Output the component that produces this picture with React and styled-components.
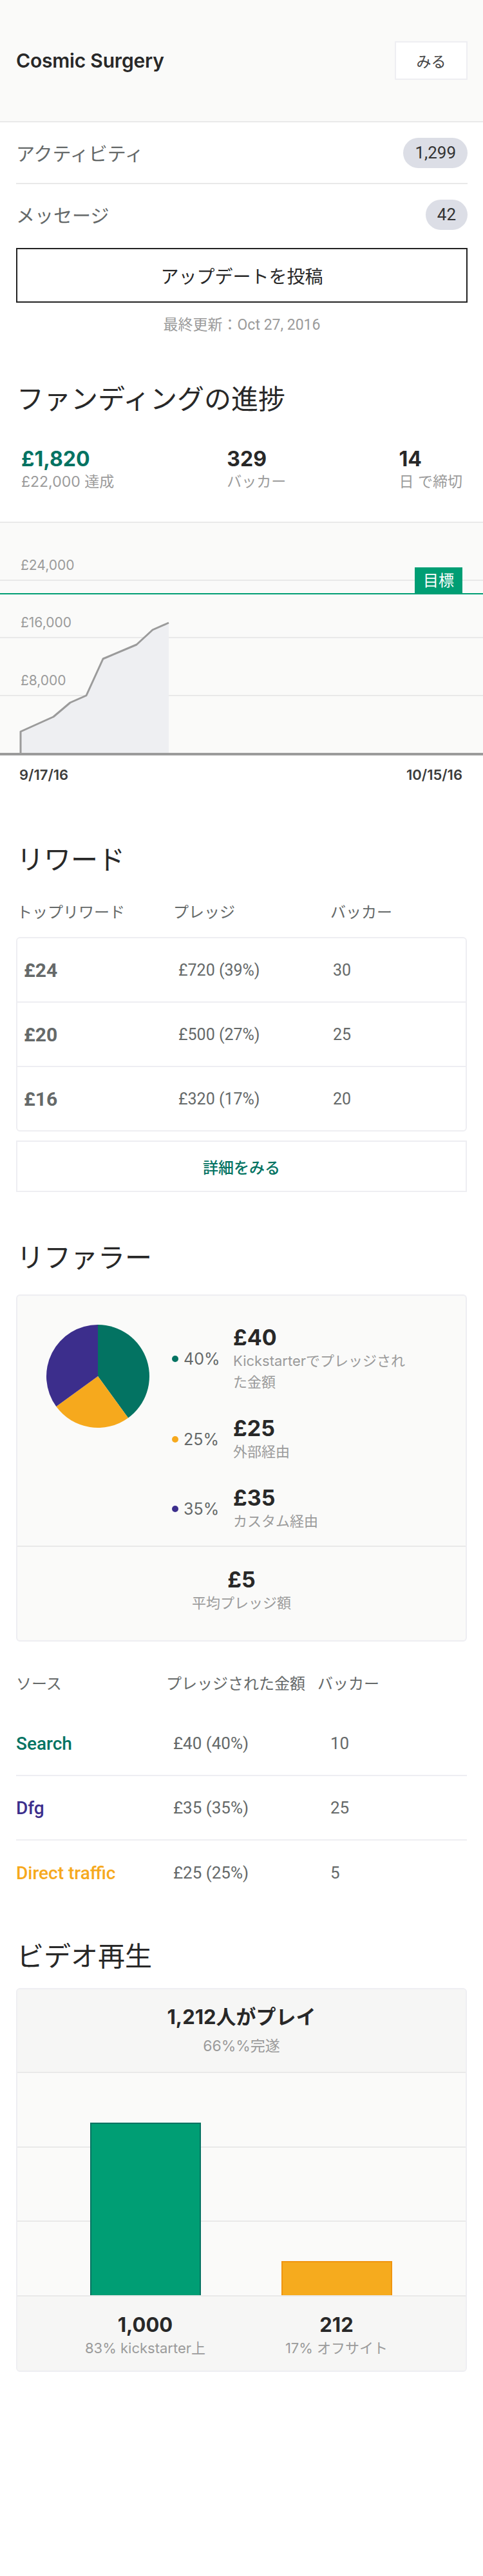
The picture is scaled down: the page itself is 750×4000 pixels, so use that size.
import React from "react";
import styled, { createGlobalStyle } from "styled-components";

const JP = `"Noto Sans CJK JP", sans-serif`;
const RB = `Roboto, "Noto Sans CJK JP", sans-serif`;
const IN = `Inter, "Noto Sans CJK JP", sans-serif`;

const C = {
  dark: "#282828",
  mid: "#656969",
  light: "#9b9b9b",
  green: "#037362",
  green5: "#009e74",
  purple: "#3c2e8c",
  orange: "#f6a91d",
  line: "#e9e9e9",
  cardLine: "#eeeef2",
  panel: "#fafaf9",
  panelDark: "#f6f6f5",
};

const Global = createGlobalStyle`
  html, body { margin: 0; padding: 0; background: #fff; }
  body { font-family: ${JP}; color: ${C.dark}; -webkit-font-smoothing: antialiased; }
  * { box-sizing: border-box; }
`;

const Page = styled.div`
  width: 750px;
  padding-bottom: 300px;
`;

const Header = styled.header`
  height: 190px;
  background: ${C.panel};
  border-bottom: 2px solid ${C.line};
  display: flex;
  align-items: center;
  justify-content: space-between;
  padding: 0 24px 0 25px;
`;

const Title = styled.h1`
  margin: 0;
  font-family: ${IN};
  font-size: 30px;
  font-weight: 600;
  letter-spacing: -0.2px;
  color: ${C.dark};
`;

const ViewButton = styled.button`
  width: 113px;
  height: 60px;
  background: #fff;
  border: 2px solid ${C.cardLine};
  font-family: ${JP};
  font-size: 23px;
  font-weight: 400;
  color: #444;
  padding: 0;
`;

const Padded = styled.div`
  padding: 0 24px 0 25px;
`;

const StatRow = styled.div`
  height: ${(p) => (p.$divider ? 96 : 94)}px;
  display: flex;
  align-items: center;
  justify-content: space-between;
  border-bottom: ${(p) => (p.$divider ? `2px solid ${C.line}` : "none")};
`;

const RowLabel = styled.span`
  font-family: ${JP};
  font-size: 29px;
  color: ${C.mid};
`;

const Badge = styled.span`
  height: 47px;
  min-width: 47px;
  padding: 0 18px;
  border-radius: 24px;
  background: #dcdee6;
  display: inline-flex;
  align-items: center;
  justify-content: center;
  font-family: ${RB};
  font-size: 26px;
  color: #333;
`;

const PostButton = styled.button`
  display: block;
  width: 100%;
  height: 85px;
  margin-top: 5px;
  background: #fff;
  border: 2px solid #222;
  font-family: ${JP};
  font-size: 28px;
  font-weight: 400;
  color: ${C.dark};
`;

const Updated = styled.p`
  margin: 22px 0 0;
  text-align: center;
  font-family: ${RB};
  font-size: 23px;
  line-height: 26px;
  color: ${C.light};
`;

const SectionTitle = styled.h2`
  margin: ${(p) => p.$mt}px 0 0;
  padding: 0 26px;
  font-family: ${JP};
  font-size: 42px;
  font-weight: 400;
  line-height: 60px;
  color: ${C.dark};
`;

const Stats = styled.div`
  display: flex;
  justify-content: space-between;
  padding: 0 32px 0 33px;
  margin-top: 46px;
`;

const Stat = styled.div`
  display: flex;
  flex-direction: column;
`;

const StatValue = styled.span`
  font-family: ${IN};
  font-size: 32px;
  font-weight: 700;
  line-height: 40px;
  color: ${(p) => p.$color || C.dark};
`;

const StatLabel = styled.span`
  font-family: ${IN};
  font-size: 23px;
  line-height: 30px;
  color: ${C.light};
`;

const ChartSvg = styled.svg`
  display: block;
  margin-top: 47px;
`;

const Dates = styled.div`
  display: flex;
  justify-content: space-between;
  padding: 0 32px 0 30px;
  margin-top: 14px;
  font-family: ${IN};
  font-size: 22px;
  font-weight: 600;
  line-height: 30px;
  color: #3c3c3c;
`;

const ColHead = styled.div`
  display: grid;
  grid-template-columns: ${(p) => p.$cols};
  padding: 0 25px 0 ${(p) => p.$pl || 25}px;
  margin-top: ${(p) => p.$mt}px;
  font-family: ${JP};
  font-size: 24px;
  line-height: 34px;
  color: ${C.mid};
`;

const RewardBox = styled.div`
  margin: 23px 25px 0;
  border: 2px solid ${C.cardLine};
  border-radius: 6px;
`;

const RewardRow = styled.div`
  height: 98px;
  display: grid;
  grid-template-columns: 240px 240px 1fr;
  align-items: center;
  padding-left: 10px;
  & + & {
    border-top: 2px solid ${C.cardLine};
    height: 100px;
  }
`;

const Tier = styled.span`
  font-family: ${RB};
  font-size: 30px;
  font-weight: 700;
  color: ${C.mid};
`;

const Cell = styled.span`
  font-family: ${RB};
  font-size: 25px;
  color: ${C.mid};
`;

const DetailButton = styled.button`
  display: block;
  width: calc(100% - 50px);
  height: 80px;
  margin: 14px 25px 0;
  background: #fff;
  border: 2px solid ${C.cardLine};
  font-family: ${JP};
  font-size: 24px;
  font-weight: 500;
  color: ${C.green};
`;

const Card = styled.div`
  margin: ${(p) => p.$mt}px 25px 0;
  border: 2px solid ${C.cardLine};
  border-radius: 6px;
  background: ${C.panel};
  overflow: hidden;
`;

const RefTop = styled.div`
  display: flex;
  align-items: flex-start;
  gap: 35px;
  padding: 45px 20px 21px 45px;
`;

const Legend = styled.div`
  display: flex;
  flex-direction: column;
  gap: 35px;
`;

const LegendItem = styled.div`
  display: flex;
  align-items: center;
`;

const Pct = styled.div`
  width: 95px;
  flex-shrink: 0;
  display: flex;
  align-items: center;
  gap: 8px;
  font-family: ${IN};
  font-size: 25px;
  color: ${C.mid};
`;

const Dot = styled.span`
  width: 10px;
  height: 10px;
  border-radius: 50%;
  background: ${(p) => p.$color};
`;

const AmountCol = styled.div`
  max-width: 276px;
  display: flex;
  flex-direction: column;
`;

const Amount = styled.span`
  font-family: ${IN};
  font-size: 34px;
  font-weight: 700;
  line-height: 40px;
  color: ${C.dark};
`;

const AmountLabel = styled.span`
  font-family: ${IN};
  font-size: 22px;
  line-height: 33px;
  color: ${C.light};
`;

const RefBottom = styled.div`
  border-top: 2px solid ${C.line};
  padding: 31px 0 41px;
  display: flex;
  flex-direction: column;
  align-items: center;
`;

const SourceList = styled.div`
  margin: 28px 25px 0;
`;

const SourceRow = styled.div`
  height: 100px;
  display: grid;
  grid-template-columns: 244px 244px 1fr;
  align-items: center;
  border-bottom: 2px solid ${C.cardLine};
  &:last-child {
    border-bottom: none;
  }
`;

const SourceName = styled.span`
  font-family: ${RB};
  font-size: 28px;
  font-weight: 500;
  color: ${(p) => p.$color};
`;

const SourceVal = styled.span`
  font-family: ${RB};
  font-size: 26px;
  color: ${C.mid};
`;

const VideoHead = styled.div`
  background: ${C.panelDark};
  padding: 23px 0 24px;
  display: flex;
  flex-direction: column;
  align-items: center;
  gap: 9px;
`;

const BigNum = styled.span`
  font-family: ${IN};
  font-size: 31px;
  font-weight: 700;
  line-height: 40px;
  color: ${C.dark};
`;

const SmallGray = styled.span`
  font-family: ${IN};
  font-size: ${(p) => p.$size || 22}px;
  line-height: 32px;
  color: ${C.light};
`;

const BarArea = styled.div`
  height: 349px;
  border-top: 2px solid ${C.line};
  border-bottom: 2px solid ${C.line};
  background:
    linear-gradient(${C.line}, ${C.line}) 0 114px / 100% 2px no-repeat,
    linear-gradient(${C.line}, ${C.line}) 0 229px / 100% 2px no-repeat,
    ${C.panel};
  display: flex;
  padding: 0 52px 0 50px;
`;

const BarCol = styled.div`
  flex: 1;
  display: flex;
  justify-content: center;
  align-items: flex-end;
`;

const Bar = styled.div`
  width: 172px;
  background: ${(p) => p.$fill};
  border: 2px solid ${(p) => p.$edge};
  border-bottom: none;
`;

const VideoFoot = styled.div`
  background: ${C.panelDark};
  display: flex;
  padding: 24px 52px 19px 50px;
`;

const FootCol = styled.div`
  flex: 1;
  display: flex;
  flex-direction: column;
  align-items: center;
`;

function FundingChart() {
  const pts = [
    [32, 326],
    [83, 303],
    [109, 281],
    [134, 270],
    [160, 213],
    [212, 191],
    [237, 168],
    [262, 157],
  ];
  const line = `M32 361 ` + pts.map(([x, y]) => `L${x} ${y}`).join(" ");
  const area = line + ` L262 361 Z`;
  const label = { fontFamily: "Inter, sans-serif", fontSize: 21, fill: C.light };
  return (
    <ChartSvg width="750" height="364" viewBox="0 0 750 364">
      <rect x="0" y="0" width="750" height="364" fill={C.panel} />
      <rect x="0" y="0" width="750" height="2" fill={C.line} />
      <text x="32" y="75" style={label}>£24,000</text>
      <rect x="0" y="90" width="750" height="2" fill={C.line} />
      <rect x="0" y="111" width="750" height="2" fill={C.green5} />
      <rect x="644" y="71" width="74" height="41" fill={C.green5} />
      <text
        x="681"
        y="100"
        textAnchor="middle"
        style={{ fontFamily: JP, fontSize: 24, fill: "#fff" }}
      >
        目標
      </text>
      <text x="32" y="164" style={label}>£16,000</text>
      <rect x="0" y="179" width="750" height="2" fill={C.line} />
      <text x="32" y="254" style={label}>£8,000</text>
      <rect x="0" y="269" width="750" height="2" fill={C.line} />
      <path d={area} fill="#eeeff2" />
      <path d={line} fill="none" stroke={C.light} strokeWidth="3" strokeLinejoin="round" />
      <rect x="0" y="359" width="750" height="4" fill={C.light} />
    </ChartSvg>
  );
}

function Pie() {
  return (
    <svg width="160" height="160" viewBox="0 0 160 160" style={{ flexShrink: 0 }}>
      <path d="M80 80 L80 0 A80 80 0 0 1 127.02 144.72 Z" fill={C.green} />
      <path d="M80 80 L127.02 144.72 A80 80 0 0 1 15.28 127.02 Z" fill={C.orange} />
      <path d="M80 80 L15.28 127.02 A80 80 0 0 1 80 0 Z" fill={C.purple} />
    </svg>
  );
}

const rewards = [
  ["£24", "£720 (39%)", "30"],
  ["£20", "£500 (27%)", "25"],
  ["£16", "£320 (17%)", "20"],
];

const referrers = [
  { pct: "40%", color: C.green, amount: "£40", label: "Kickstarterでプレッジされた金額" },
  { pct: "25%", color: C.orange, amount: "£25", label: "外部経由" },
  { pct: "35%", color: C.purple, amount: "£35", label: "カスタム経由" },
];

const sources = [
  { name: "Search", color: C.green, val: "£40 (40%)", n: "10" },
  { name: "Dfg", color: C.purple, val: "£35 (35%)", n: "25" },
  { name: "Direct traffic", color: C.orange, val: "£25 (25%)", n: "5" },
];

export default function App() {
  return (
    <Page>
      <Global />
      <Header>
        <Title>Cosmic Surgery</Title>
        <ViewButton>みる</ViewButton>
      </Header>

      <Padded>
        <StatRow $divider>
          <RowLabel>アクティビティ</RowLabel>
          <Badge>1,299</Badge>
        </StatRow>
        <StatRow>
          <RowLabel>メッセージ</RowLabel>
          <Badge>42</Badge>
        </StatRow>
        <PostButton>アップデートを投稿</PostButton>
        <Updated>最終更新：Oct 27, 2016</Updated>
      </Padded>

      <SectionTitle $mt={69}>ファンディングの進捗</SectionTitle>
      <Stats>
        <Stat>
          <StatValue $color={C.green}>£1,820</StatValue>
          <StatLabel>£22,000 達成</StatLabel>
        </Stat>
        <Stat>
          <StatValue>329</StatValue>
          <StatLabel>バッカー</StatLabel>
        </Stat>
        <Stat>
          <StatValue>14</StatValue>
          <StatLabel>日 で締切</StatLabel>
        </Stat>
      </Stats>
      <FundingChart />
      <Dates>
        <span>9/17/16</span>
        <span>10/15/16</span>
      </Dates>

      <SectionTitle $mt={84}>リワード</SectionTitle>
      <ColHead $cols="243px 244px 1fr" $pl={26} $mt={36}>
        <span>トップリワード</span>
        <span>プレッジ</span>
        <span>バッカー</span>
      </ColHead>
      <RewardBox>
        {rewards.map(([t, p, b]) => (
          <RewardRow key={t}>
            <Tier>{t}</Tier>
            <Cell>{p}</Cell>
            <Cell>{b}</Cell>
          </RewardRow>
        ))}
      </RewardBox>
      <DetailButton>詳細をみる</DetailButton>

      <SectionTitle $mt={69}>リファラー</SectionTitle>
      <Card $mt={30}>
        <RefTop>
          <Pie />
          <Legend>
            {referrers.map((r) => (
              <LegendItem key={r.pct}>
                <Pct>
                  <Dot $color={r.color} />
                  {r.pct}
                </Pct>
                <AmountCol>
                  <Amount>{r.amount}</Amount>
                  <AmountLabel>{r.label}</AmountLabel>
                </AmountCol>
              </LegendItem>
            ))}
          </Legend>
        </RefTop>
        <RefBottom>
          <Amount>£5</Amount>
          <AmountLabel>平均プレッジ額</AmountLabel>
        </RefBottom>
      </Card>

      <ColHead $cols="233px 235px 1fr" $mt={47}>
        <span>ソース</span>
        <span>プレッジされた金額</span>
        <span>バッカー</span>
      </ColHead>
      <SourceList>
        {sources.map((s) => (
          <SourceRow key={s.name}>
            <SourceName $color={s.color}>{s.name}</SourceName>
            <SourceVal>{s.val}</SourceVal>
            <SourceVal>{s.n}</SourceVal>
          </SourceRow>
        ))}
      </SourceList>

      <SectionTitle $mt={47}>ビデオ再生</SectionTitle>
      <Card $mt={22}>
        <VideoHead>
          <BigNum>1,212人がプレイ</BigNum>
          <SmallGray $size={23}>66%%完遂</SmallGray>
        </VideoHead>
        <BarArea>
          <BarCol>
            <Bar $fill={C.green5} $edge={C.green} style={{ height: 268 }} />
          </BarCol>
          <BarCol>
            <Bar $fill="#f6ab1e" $edge="#f0950f" style={{ height: 53 }} />
          </BarCol>
        </BarArea>
        <VideoFoot>
          <FootCol>
            <BigNum>1,000</BigNum>
            <SmallGray>83% kickstarter上</SmallGray>
          </FootCol>
          <FootCol>
            <BigNum>212</BigNum>
            <SmallGray>17% オフサイト</SmallGray>
          </FootCol>
        </VideoFoot>
      </Card>
    </Page>
  );
}
